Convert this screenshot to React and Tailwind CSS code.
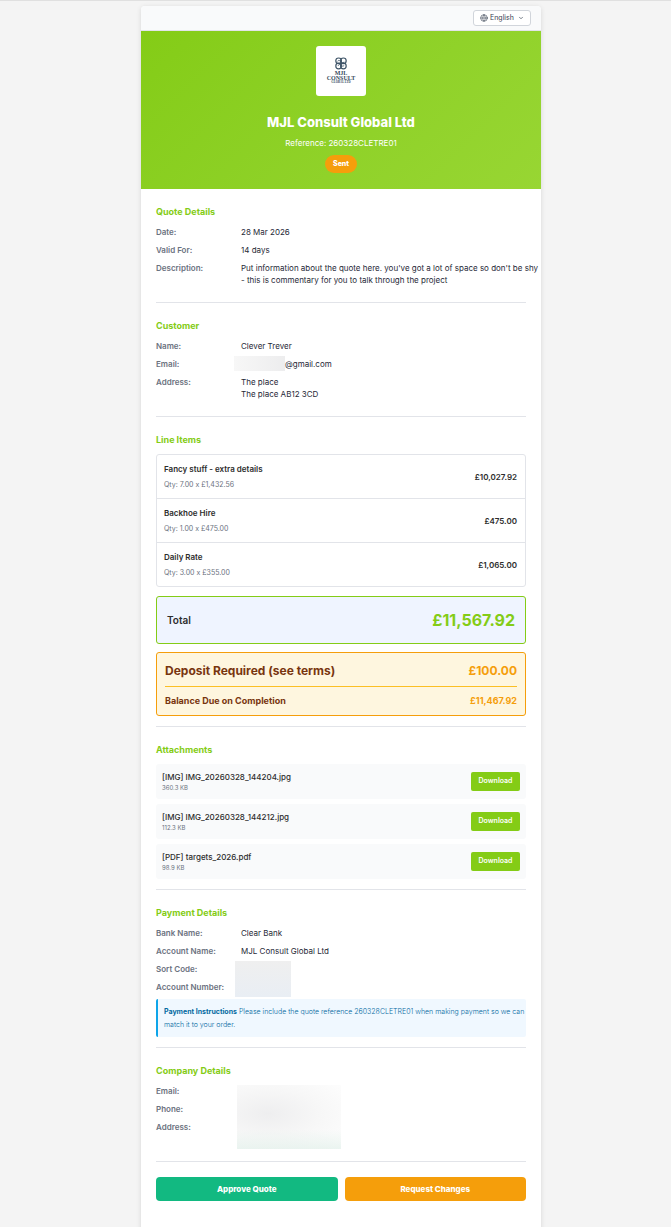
import React, { useState } from 'react';
import { ChevronDown, Globe } from 'lucide-react';

const lineItems = [
    { name: 'Fancy stuff - extra details', qty: '7.00', rate: '£1,432.56', total: '£10,027.92' },
    { name: 'Backhoe Hire', qty: '1.00', rate: '£475.00', total: '£475.00' },
    { name: 'Daily Rate', qty: '3.00', rate: '£355.00', total: '£1,065.00' },
];

const attachments = [
    { type: 'IMG', name: 'IMG_20260328_144204.jpg', size: '360.3 KB' },
    { type: 'IMG', name: 'IMG_20260328_144212.jpg', size: '112.3 KB' },
    { type: 'PDF', name: 'targets_2026.pdf', size: '98.9 KB' },
];

function Section({ title, className = 'pb-4', children }) {
    return (
        <section className={`border-b border-[#e2e4e9] pt-4 ${className}`}>
            <h2 className="mb-[7px] text-[9px] leading-[14px] font-bold text-[#84cc16]">{title}</h2>
            {children}
        </section>
    );
}

function Details({ children }) {
    return <dl className="flex flex-col gap-[6px] text-[8px] leading-3">{children}</dl>;
}

function Row({ label, children }) {
    return (
        <div className="grid grid-cols-[85px_1fr]">
            <dt className="font-semibold text-[#6b7280]">{label}:</dt>
            <dd className="text-[#1f2937]">{children}</dd>
        </div>
    );
}

function CompanyLogo() {
    return (
        <svg className="size-[50px] rounded-[3px] bg-white" viewBox="0 0 50 50" role="img" aria-label="MJL Consult">
            <g fill="none" stroke="#3f5568" strokeWidth="1.2">
                <circle cx="22.6" cy="14.8" r="2.8" />
                <circle cx="27.4" cy="14.8" r="2.8" />
                <circle cx="22.6" cy="20" r="2.8" />
                <circle cx="27.4" cy="20" r="2.8" />
                <path d="M21.6 15.2c1.2-1.4 2.6-.4 3.4.6s1.8 1.2 3.2.2M22 19.8c1-1.6 2.2-1.6 3-.6s2 1.4 3.2.2" strokeWidth="0.9" />
            </g>
            <g fill="#34495c" fontFamily="'Liberation Serif', serif" fontWeight="700" textAnchor="middle">
                <text x="25" y="29" fontSize="6">MJL</text>
                <text x="25" y="34" fontSize="6">CONSULT</text>
                <text x="25" y="37" fontSize="3">GLOBAL LTD</text>
            </g>
        </svg>
    );
}

export default function App() {
    const [language, setLanguage] = useState('en');

    return (
        <div className="min-h-screen border-t border-[#e0e0e0] bg-[#f4f4f4] pt-[5px] pl-[11px] font-['Inter',sans-serif] antialiased">
            <main className="mx-auto max-w-[400px] rounded-t-[4px] bg-white shadow-[0_1px_5px_rgba(0,0,0,0.12)]">
                <div className="flex items-center justify-end rounded-t-[4px] border-b border-[#e2e4e9] bg-[#f9fafb] px-[10px] py-1">
                    <div className="flex h-4 items-center gap-[2px] rounded-[3px] border border-[#d1d5db] bg-white px-[6px] text-[#4b5563]">
                        <Globe size={8} strokeWidth={2} />
                        <select
                            aria-label="Language"
                            className="w-[26px] appearance-none bg-transparent text-[7px] leading-[10px] text-[#374151] outline-none"
                            value={language}
                            onChange={(e) => setLanguage(e.target.value)}
                        >
                            <option value="en">English</option>
                            <option value="fr">Français</option>
                        </select>
                        <ChevronDown size={6} strokeWidth={3} />
                    </div>
                </div>

                <header className="flex flex-col items-center bg-linear-135 from-[#84cc16] to-[#98d633] pt-[15px] pb-4 text-white">
                    <CompanyLogo />
                    <h1 className="mt-4 text-[13px] leading-5 font-extrabold">MJL Consult Global Ltd</h1>
                    <p className="mt-[5px] text-[8px] leading-3">Reference: 260328CLETRE01</p>
                    <span className="mt-[6px] rounded-full bg-[#f59e0b] px-2 py-[3px] text-[7px] leading-3 font-extrabold">
                        Sent
                    </span>
                </header>

                <div className="px-[15px] pb-[30px]">
                    <Section title="Quote Details">
                        <Details>
                            <Row label="Date">28 Mar 2026</Row>
                            <Row label="Valid For">14 days</Row>
                            <Row label="Description">
                                <p className="-mr-[14px]">
                                    Put information about the quote here. you've got a lot of space so don't be shy
                                    <br />- this is commentary for you to talk through the project
                                </p>
                            </Row>
                        </Details>
                    </Section>

                    <Section title="Customer">
                        <Details>
                            <Row label="Name">Clever Trever</Row>
                            <Row label="Email">
                                <span className="-my-[2px] -ml-[7px] flex items-center">
                                    <span className="h-[15px] w-[51px] bg-linear-to-r from-[#f7f7f7] to-[#ededee]" />
                                    @gmail.com
                                </span>
                            </Row>
                            <Row label="Address">
                                The place
                                <br />
                                The place AB12 3CD
                            </Row>
                        </Details>
                    </Section>

                    <Section title="Line Items" className="pb-[10px]">
                        <ul className="divide-y divide-[#e2e4e9] rounded-[3px] border border-[#e2e4e9]">
                            {lineItems.map((item) => (
                                <li key={item.name} className="flex items-center justify-between py-2 pr-2 pl-[7px]">
                                    <div>
                                        <p className="text-[8px] leading-3 font-semibold text-[#2d2d2d]">{item.name}</p>
                                        <p className="mt-[5px] text-[7px] leading-[10px] text-[#6b7280]">
                                            Qty: {item.qty} x {item.rate}
                                        </p>
                                    </div>
                                    <span className="text-[8px] leading-3 font-semibold text-[#2d2d2d]">{item.total}</span>
                                </li>
                            ))}
                        </ul>

                        <div className="mt-[9px] flex h-12 items-center justify-between rounded-[3px] border border-[#84cc16] bg-[#eff4ff] px-[10px]">
                            <span className="text-[10px] font-semibold text-[#2d2d2d]">Total</span>
                            <span className="text-[16px] font-bold text-[#84cc16]">£11,567.92</span>
                        </div>

                        <div className="mt-2 rounded-[3px] border border-[#f59e0b] bg-[#fef6df] px-2 pt-2 pb-[7px] font-bold">
                            <div className="flex items-center justify-between border-b border-[#fbbf24] pb-[5px] text-[12px] leading-5">
                                <span className="text-[#78350f]">Deposit Required (see terms)</span>
                                <span className="text-[#f59e0b]">£100.00</span>
                            </div>
                            <div className="flex items-center justify-between pt-[7px] text-[9px] leading-[14px]">
                                <span className="text-[#78350f]">Balance Due on Completion</span>
                                <span className="text-[#f59e0b]">£11,467.92</span>
                            </div>
                        </div>
                    </Section>

                    <Section title="Attachments" className="pb-[10px]">
                        <ul className="flex flex-col gap-[5px]">
                            {attachments.map((file) => (
                                <li
                                    key={file.name}
                                    className="flex h-[35px] items-center justify-between rounded-[3px] bg-[#f9fafb] px-[6px]"
                                >
                                    <div>
                                        <p className="text-[8px] leading-3 font-medium text-[#2d2d2d]">
                                            [{file.type}] {file.name}
                                        </p>
                                        <p className="text-[6px] leading-[10px] text-[#6b7280]">{file.size}</p>
                                    </div>
                                    <button className="h-[19px] w-[49px] rounded-[2px] bg-[#84cc16] text-[7px] font-semibold text-white">
                                        Download
                                    </button>
                                </li>
                            ))}
                        </ul>
                    </Section>

                    <Section title="Payment Details" className="pb-[10px]">
                        <div className="relative">
                            <Details>
                                <Row label="Bank Name">Clear Bank</Row>
                                <Row label="Account Name">MJL Consult Global Ltd</Row>
                                <Row label="Sort Code" />
                                <Row label="Account Number" />
                            </Details>
                            <div className="absolute -bottom-1 left-[79px] h-9 w-14 bg-linear-to-b from-[#efefef] to-[#e9eef4]" />
                        </div>
                        <p className="mt-[6px] rounded-[2px] border-l-2 border-[#0ea5e9] bg-[#f0f8ff] py-[6px] pl-[6px] text-[7px] leading-[13px] font-light text-[#0369a1]">
                            <strong className="font-bold">Payment Instructions</strong> Please include the quote reference
                            260328CLETRE01 when making payment so we can match it to your order.
                        </p>
                    </Section>

                    <Section title="Company Details">
                        <div className="relative">
                            <Details>
                                <Row label="Email" />
                                <Row label="Phone" />
                                <div className="h-6">
                                    <Row label="Address" />
                                </div>
                            </Details>
                            <div className="absolute top-0 left-[81px] h-16 w-[104px] bg-white bg-[radial-gradient(ellipse_at_30%_45%,#eeeeef,#f7f7f7_50%,#fefefe)]">
                                <div className="h-full bg-linear-to-t from-[#e2f0ea]/70 to-transparent to-30%" />
                            </div>
                        </div>
                    </Section>

                    <div className="mt-[15px] grid grid-cols-2 gap-[7px] text-[8px] font-extrabold text-white">
                        <button className="h-6 rounded-[4px] bg-[#12b981]">Approve Quote</button>
                        <button className="h-6 rounded-[4px] bg-[#f59e0b]">Request Changes</button>
                    </div>
                </div>
            </main>
        </div>
    );
}
